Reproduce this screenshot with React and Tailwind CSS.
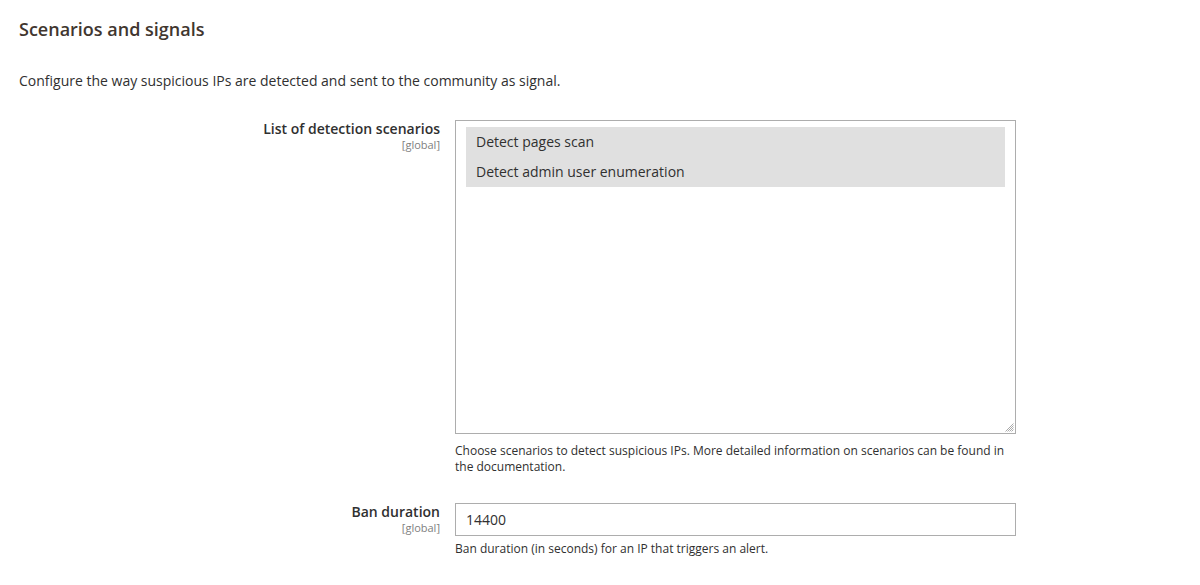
export default function App() {
  const scenarios = ["Detect pages scan", "Detect admin user enumeration"];

  return (
    <div className="min-h-screen bg-white px-[19px] pt-[18px] text-[#303030] font-['Open_Sans',sans-serif]">
      {/* Section title */}
      <h2 className="text-[18px] leading-[22px] font-semibold text-[#41362f]">
        Scenarios and signals
      </h2>
      <p className="mt-[31px] text-[14px] leading-[20px]">
        Configure the way suspicious IPs are detected and sent to the community as signal.
      </p>

      {/* Scenarios multiselect */}
      <div className="mt-[29px] flex gap-[15px]">
        <div className="w-[421px] text-right">
          <div className="text-[14px] leading-[18px] font-semibold">List of detection scenarios</div>
          <div className="text-[11px] leading-[13px] text-[#808080]">[global]</div>
        </div>
        <div className="w-[561px]">
          <div className="relative h-[314px] border border-[#adadad] bg-white px-[10px] pt-[6px]">
            {scenarios.map((s) => (
              <div key={s} className="h-[30px] bg-[#e0e0e0] px-[10px] text-[14px] leading-[30px]">
                {s}
              </div>
            ))}
            <svg className="absolute right-[1px] bottom-[1px] w-[10px] h-[10px]" viewBox="0 0 10 10">
              <path d="M9.5 1.5 L1.5 9.5 M9.5 3.5 L3.5 9.5 M9.5 5.5 L5.5 9.5 M9.5 7.5 L7.5 9.5" stroke="#a0a0a0" strokeWidth="0.9" fill="none" />
            </svg>
          </div>
          <p className="mt-[9px] text-[12px] leading-[16px]">
            Choose scenarios to detect suspicious IPs. More detailed information on scenarios can be found in the documentation.
          </p>
        </div>
      </div>

      {/* Ban duration */}
      <div className="mt-[28px] flex gap-[15px]">
        <div className="w-[421px] text-right">
          <div className="text-[14px] leading-[18px] font-semibold">Ban duration</div>
          <div className="text-[11px] leading-[13px] text-[#808080]">[global]</div>
        </div>
        <div className="w-[561px]">
          <input
            type="text"
            defaultValue="14400"
            className="block w-full h-[33px] border border-[#adadad] px-[10px] text-[14px] text-[#303030] outline-none"
          />
          <p className="mt-[5px] text-[12px] leading-[16px]">
            Ban duration (in seconds) for an IP that triggers an alert.
          </p>
        </div>
      </div>
    </div>
  );
}
